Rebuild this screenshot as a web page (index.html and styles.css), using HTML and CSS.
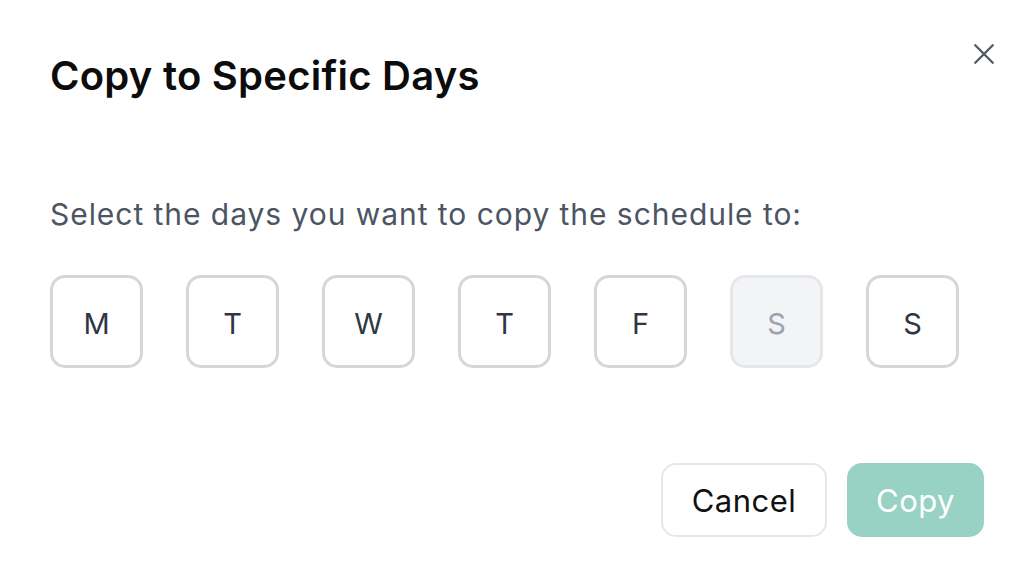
FILE: index.html
```html
<!DOCTYPE html>
<html lang="en">
<head>
  <meta charset="UTF-8">
  <meta name="viewport" content="width=device-width, initial-scale=1.0">
  <title>Copy to Specific Days</title>
  <link rel="stylesheet" href="styles.css">
</head>
<body>
  <div class="dialog">
    <div class="dialog-header">
      <h1>Copy to Specific Days</h1>
      <button class="close-btn" aria-label="Close">
        <svg width="28" height="28" viewBox="0 0 24 24" fill="none" stroke="currentColor" stroke-width="2" stroke-linecap="round">
          <path d="M4.5 4.5L19.5 19.5M19.5 4.5L4.5 19.5"/>
        </svg>
      </button>
    </div>

    <p class="hint">Select the days you want to copy the schedule to:</p>

    <div class="days">
      <button class="day">M</button>
      <button class="day">T</button>
      <button class="day">W</button>
      <button class="day">T</button>
      <button class="day">F</button>
      <button class="day disabled" disabled>S</button>
      <button class="day">S</button>
    </div>

    <div class="actions">
      <button class="btn btn-cancel">Cancel</button>
      <button class="btn btn-copy" disabled>Copy</button>
    </div>
  </div>
</body>
</html>
```

FILE: styles.css
```css
* {
  margin: 0;
  padding: 0;
  box-sizing: border-box;
}

body {
  font-family: 'Inter', 'Liberation Sans', sans-serif;
  background: #fff;
  color: #111;
}

.dialog {
  width: 1024px;
  height: 585px;
  padding: 0 40px 0 50px;
  display: flex;
  flex-direction: column;
}

.dialog-header {
  display: flex;
  justify-content: space-between;
  align-items: flex-start;
  padding-top: 52px;
}

h1 {
  font-size: 40px;
  font-weight: 600;
  line-height: 48px;
  color: #0c0c0c;
  letter-spacing: 0.25px;
}

.close-btn {
  background: none;
  border: none;
  color: #555a60;
  margin-top: -12px;
  margin-right: -14px;
  cursor: pointer;
}

.hint {
  margin-top: 96px;
  font-size: 30px;
  line-height: 36px;
  letter-spacing: 0.95px;
  color: #4b5563;
}

.days {
  display: flex;
  gap: 43px;
  margin-top: 43px;
}

.day {
  width: 93px;
  height: 93px;
  padding-top: 4px;
  border: 3px solid #d4d6dc;
  border-radius: 15px;
  background: #fff;
  font-family: inherit;
  font-size: 29px;
  color: #2f3644;
  cursor: pointer;
}

.day.disabled {
  background: #f3f4f6;
  border-color: #e6e7ea;
  color: #9ca3af;
  cursor: not-allowed;
}

.actions {
  display: flex;
  justify-content: flex-end;
  gap: 20px;
  margin-top: 95px;
}

.btn {
  height: 74px;
  border-radius: 15px;
  font-family: inherit;
  font-size: 31px;
  letter-spacing: 0.5px;
  cursor: pointer;
}

.btn-cancel {
  width: 166px;
  background: #fff;
  border: 2px solid #e5e7eb;
  color: #111;
}

.btn-copy {
  width: 137px;
  background: #98d2c4;
  border: none;
  color: #fff;
}
```
